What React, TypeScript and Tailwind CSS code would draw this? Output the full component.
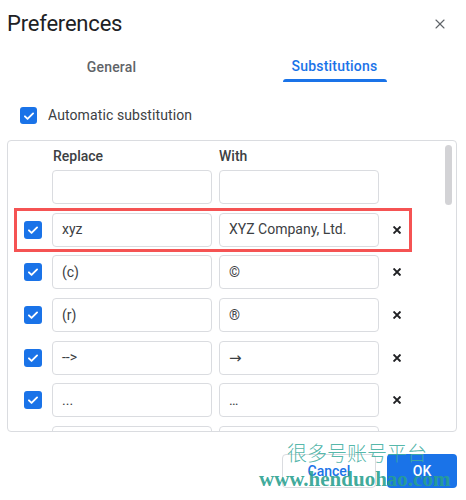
import { X } from 'lucide-react'

const rows = [
  { from: 'xyz', to: 'XYZ Company, Ltd.', highlight: true },
  { from: '(c)', to: '©' },
  { from: '(r)', to: '®' },
  { from: '-->', to: '→' },
  { from: '...', to: '…' },
  { from: '', to: '' },
]

function Check({ size = 18 }: { size?: number }) {
  return (
    <div
      className="shrink-0 rounded-[3px] bg-[#1a73e8] flex items-center justify-center"
      style={{ width: size, height: size }}
    >
      <svg viewBox="0 0 24 24" className="w-[14px] h-[14px]" fill="none" stroke="white" strokeWidth="3.2" strokeLinecap="round" strokeLinejoin="round">
        <path d="M5 12.5l4.5 4.5L19 7.5" />
      </svg>
    </div>
  )
}

function Field({ value }: { value: string }) {
  return (
    <div className="w-[160px] h-[34px] shrink-0 rounded-[4px] border border-[#dadce0] bg-white flex items-center pl-[9px] text-[14px] text-[#3c4043]">
      {value === '→' ? <span className="font-['DejaVu_Sans',sans-serif] text-[15px]">{value}</span> : value}
    </div>
  )
}

export default function App() {
  return (
    <div className="relative w-[466px] h-[500px] bg-white overflow-hidden font-['Roboto',sans-serif] text-[#202124]">
      {/* Header */}
      <div className="flex items-center justify-between pl-[7px] pr-[18px] pt-[8px] h-[40px]">
        <h1 className="text-[22px] leading-none tracking-[-0.2px] font-normal">Preferences</h1>
        <X className="w-[16px] h-[16px] text-[#5f6368]" strokeWidth={1.6} />
      </div>

      {/* Tabs */}
      <div className="flex w-[446px] mt-[14px] h-[28px]">
        <div className="flex-1 flex justify-center">
          <span className="text-[14px] font-medium text-[#5f6368] leading-[26px] tracking-[0.2px]">General</span>
        </div>
        <div className="flex-1 flex justify-center">
          <div className="flex flex-col items-center">
            <span className="text-[14px] font-medium text-[#1a73e8] leading-[25px] tracking-[0.2px]">Substitutions</span>
            <div className="w-[104px] h-[3px] rounded-t-[3px] bg-[#1a73e8]" />
          </div>
        </div>
      </div>

      {/* Automatic substitution */}
      <div className="flex items-center gap-[11px] pl-[20px] mt-[23px]">
        <Check size={17} />
        <span className="text-[14px] text-[#3c4043] tracking-[0.1px]">Automatic substitution</span>
      </div>

      {/* Substitutions panel */}
      <div className="relative mx-[7px] mt-[14px] w-[450px] h-[292px] rounded-[4px] border border-[#dadce0] overflow-hidden">
        <div className="absolute left-[437px] top-[4px] w-[7px] h-[60px] rounded-full bg-[#d3d3d6]" />
        <div className="flex flex-col pl-[16px] pt-[5px]">
          <div className="flex text-[14px] font-medium text-[#3c4043] h-[21px] items-center">
            <div className="w-[28px]" />
            <div className="w-[167px] pl-[1px]">Replace</div>
            <div>With</div>
          </div>
          <div className="flex flex-col gap-[8.7px] mt-[3px]">
            <div className="flex items-center gap-[7px] pl-[28px]">
              <Field value="" />
              <Field value="" />
            </div>
            {rows.map((r, i) => (
              <div key={i} className="relative flex items-center h-[34px]">
                {r.highlight && (
                  <div className="absolute left-[-10px] top-[-5px] w-[398px] h-[44px] border-[3px] border-[#f55353]" />
                )}
                <Check />
                <div className="w-[10px]" />
                <Field value={r.from} />
                <div className="w-[7px]" />
                <Field value={r.to} />
                <svg viewBox="0 0 10 10" className="ml-[14px] w-[8px] h-[8px]" stroke="#202124" strokeWidth="2.4" strokeLinecap="square">
                  <path d="M1.5 1.5l7 7M8.5 1.5l-7 7" />
                </svg>
              </div>
            ))}
          </div>
        </div>
      </div>

      {/* Buttons */}
      <div className="flex justify-end gap-[11px] pr-[9px] mt-[22px]">
        <button className="w-[94px] h-[34px] rounded-[4px] border border-[#dadce0] bg-white text-[14px] font-medium text-[#1a73e8]">
          Cancel
        </button>
        <button className="w-[70px] h-[34px] rounded-[4px] bg-[#1a73e8] text-[14px] font-medium text-white">
          OK
        </button>
      </div>

      {/* Watermark */}
      <div className="absolute left-[287px] top-[443px] text-[20px] leading-none text-[#3fae9f]/90 font-['Noto_Sans_CJK_SC',sans-serif] font-light">
        很多号账号平台
      </div>
      <div className="absolute left-[259px] top-[469px] text-[21px] leading-none font-bold text-[#28a08e]/90 font-['Liberation_Serif',serif]">
        www.henduohao.com
      </div>
    </div>
  )
}
